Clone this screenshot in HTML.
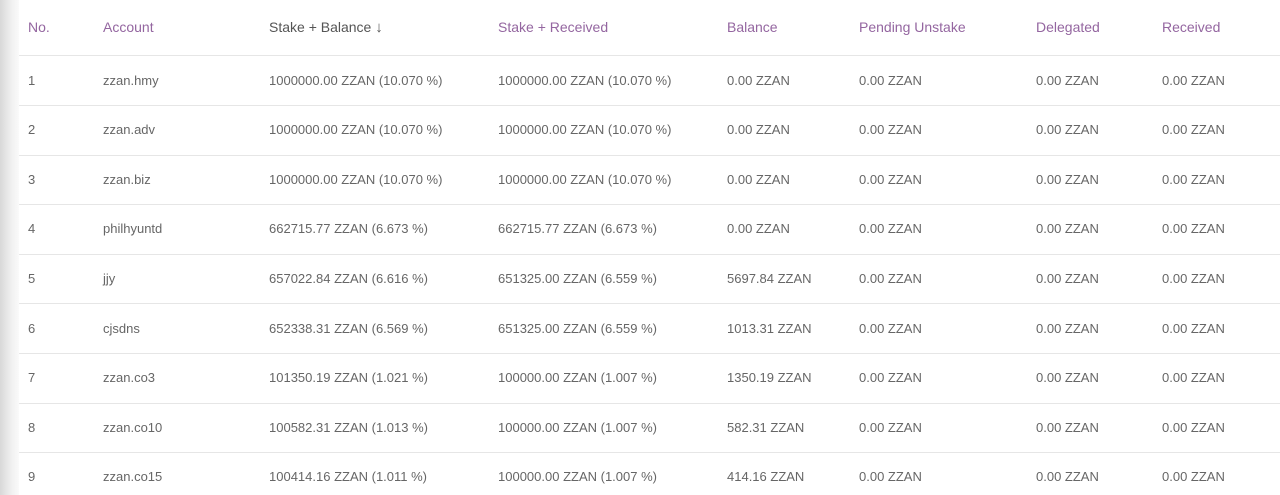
<!DOCTYPE html><html><head><style>
body{margin:0;width:1280px;height:495px;overflow:hidden;background:#fff;font-family:"Liberation Sans",sans-serif;position:relative}
.strip{position:absolute;left:0;top:0;width:19px;height:495px;background:linear-gradient(to right,#d8d8d8,#f0f0f0 60%,#fafafa)}
.c{position:absolute;white-space:nowrap;font-size:13px;color:#666;line-height:16px}
.h{font-size:14px;color:#9466a0}
.line{position:absolute;left:19px;right:0;height:1px;background:#e6e6e6}
</style></head><body><div class="strip"></div>
<div id="t"></div>
<script>
var xs=[28,103,269,498,727,859,1036,1162];
var hd=["No.","Account","Stake + Balance <b style='font-size:15px'>\u2193</b>","Stake + Received","Balance","Pending Unstake","Delegated","Received"];
var rows=[
["1","zzan.hmy","1000000.00 ZZAN (10.070 %)","1000000.00 ZZAN (10.070 %)","0.00 ZZAN"],
["2","zzan.adv","1000000.00 ZZAN (10.070 %)","1000000.00 ZZAN (10.070 %)","0.00 ZZAN"],
["3","zzan.biz","1000000.00 ZZAN (10.070 %)","1000000.00 ZZAN (10.070 %)","0.00 ZZAN"],
["4","philhyuntd","662715.77 ZZAN (6.673 %)","662715.77 ZZAN (6.673 %)","0.00 ZZAN"],
["5","jjy","657022.84 ZZAN (6.616 %)","651325.00 ZZAN (6.559 %)","5697.84 ZZAN"],
["6","cjsdns","652338.31 ZZAN (6.569 %)","651325.00 ZZAN (6.559 %)","1013.31 ZZAN"],
["7","zzan.co3","101350.19 ZZAN (1.021 %)","100000.00 ZZAN (1.007 %)","1350.19 ZZAN"],
["8","zzan.co10","100582.31 ZZAN (1.013 %)","100000.00 ZZAN (1.007 %)","582.31 ZZAN"],
["9","zzan.co15","100414.16 ZZAN (1.011 %)","100000.00 ZZAN (1.007 %)","414.16 ZZAN"]];
var h="";
hd.forEach(function(s,i){h+='<div class="c h" style="left:'+xs[i]+'px;top:19px;'+(i==2?'color:#555':'')+'">'+s+'</div>';});
h+='<div class="line" style="top:55px"></div>';
rows.forEach(function(r,j){var y=72.5+j*49.6;var r2=r.concat(["0.00 ZZAN","0.00 ZZAN","0.00 ZZAN"]);
r2.forEach(function(s,i){h+='<div class="c" style="left:'+xs[i]+'px;top:'+y+'px">'+s+'</div>';});
if(j<8)h+='<div class="line" style="top:'+Math.round(105+j*49.6)+'px"></div>';});
document.getElementById("t").innerHTML=h;
</script></body></html>
